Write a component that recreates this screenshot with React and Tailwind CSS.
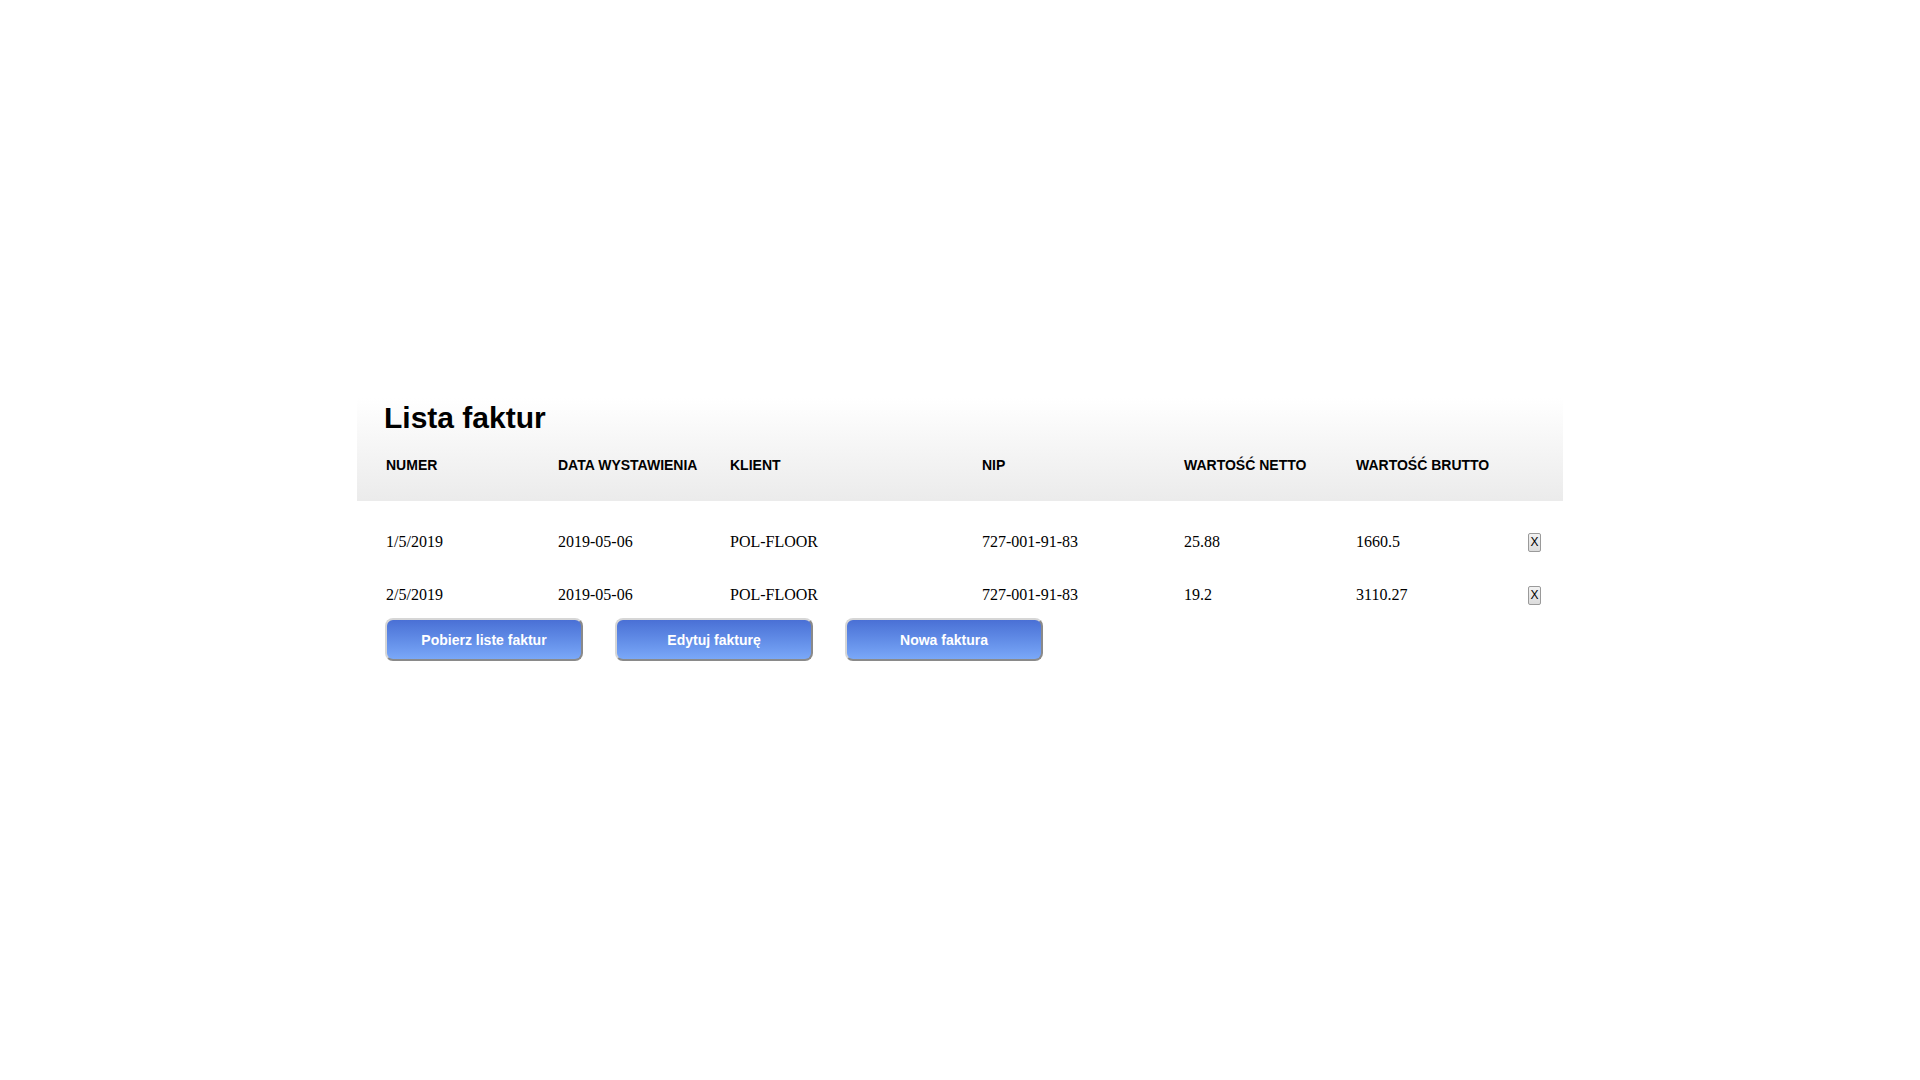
import React from "react";

const rows = [
  ["1/5/2019", "2019-05-06", "POL-FLOOR", "727-001-91-83", "25.88", "1660.5"],
  ["2/5/2019", "2019-05-06", "POL-FLOOR", "727-001-91-83", "19.2", "3110.27"],
];

const headers = ["NUMER", "DATA WYSTAWIENIA", "KLIENT", "NIP", "WARTOŚĆ NETTO", "WARTOŚĆ BRUTTO"];

const gridCols = "grid grid-cols-[172px_172px_252px_202px_172px_172px_13px]";

function Btn({ children }) {
  return (
    <button className="w-[198px] h-[43px] rounded-[8px] border-2 border-t-[#d6d6d6] border-l-[#d6d6d6] border-r-[#8a8a8a] border-b-[#8a8a8a] bg-linear-to-b from-[#4a70d5] to-[#7aa8f8] text-white font-bold text-[14px] leading-[16px] font-['Liberation_Sans',Arial,sans-serif]">
      {children}
    </button>
  );
}

export default function App() {
  return (
    <div className="min-h-screen bg-white font-['Liberation_Sans',Arial,sans-serif] text-black">
      <div className="pt-[398px] pl-[357px]">
        <div className="w-[1206px]">
          <div className="h-[103px] bg-linear-to-b from-white to-[#ebebeb] pl-[29px] pt-[3px]">
            <h1 className="-ml-[2px] text-[30px] leading-[34px] font-bold">Lista faktur</h1>
            <div className={`${gridCols} mt-[22px] text-[14px] leading-[16px] font-bold`}>
              {headers.map((h) => (
                <div key={h} className="whitespace-nowrap">{h}</div>
              ))}
              <div />
            </div>
          </div>
          <div className="pl-[29px] pt-[31px] flex flex-col gap-[33px] font-['Liberation_Serif','Times_New_Roman',serif] text-[16px] leading-[20px]">
            {rows.map((r, i) => (
              <div key={i} className={`${gridCols} h-[20px] items-center`}>
                {r.map((c, j) => (
                  <div key={j} className="whitespace-nowrap">{c}</div>
                ))}
                <button className="w-[13px] h-[19px] flex items-center justify-center border border-[#9a9a9a] rounded-[2px] bg-linear-to-b from-[#f2f2f2] to-[#dcdcdc] text-[12px] leading-[12px] font-['Liberation_Sans',Arial,sans-serif] text-black">
                  X
                </button>
              </div>
            ))}
          </div>
          <div className="pl-[28px] mt-[13px] flex gap-[32px]">
            <Btn>Pobierz liste faktur</Btn>
            <Btn>Edytuj fakturę</Btn>
            <Btn>Nowa faktura</Btn>
          </div>
        </div>
      </div>
    </div>
  );
}
